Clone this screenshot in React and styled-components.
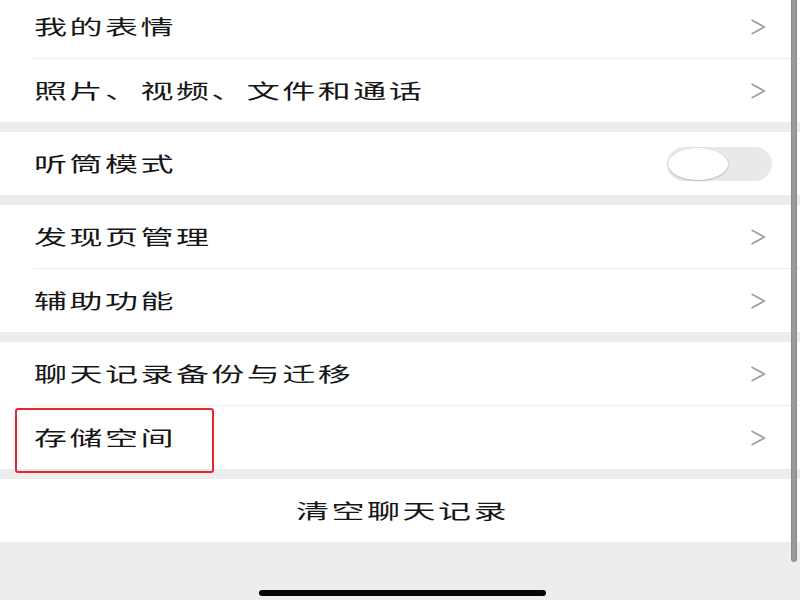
import styled, { createGlobalStyle } from 'styled-components'

const GlobalStyle = createGlobalStyle`
  html, body {
    margin: 0;
    padding: 0;
    background: #ededed;
    overflow: hidden;
  }
  body {
    font-family: "Noto Sans CJK SC", "Noto Sans", sans-serif;
  }
`

const Page = styled.div`
  position: relative;
  width: 800px;
  height: 600px;
  background: #ededed;
  overflow: hidden;
`

const List = styled.div`
  display: flex;
  flex-direction: column;
  margin-top: -5px;
`

const Group = styled.div`
  display: flex;
  flex-direction: column;
  background: #fff;
  margin-bottom: 10px;
`

const Row = styled.div`
  position: relative;
  height: 63px;
  display: flex;
  align-items: center;
  justify-content: ${p => (p.$center ? 'center' : 'space-between')};
  padding: 0 29px 0 34px;
`

const Divider = styled.div`
  height: 1px;
  margin-left: 33px;
  background: #ececec;
`

const Label = styled.span`
  display: inline-block;
  font-size: 20px;
  letter-spacing: 1.5px;
  color: #161616;
  white-space: nowrap;
  transform: scaleX(1.65);
  transform-origin: ${p => (p.$center ? 'center' : 'left')};
  line-height: 1;
`

const ChevronSvg = styled.svg`
  width: 16px;
  height: 16px;
  flex: none;
  margin-right: 5px;
`

const Switch = styled.div`
  width: 105px;
  height: 34px;
  border-radius: 17px;
  background: #e9e9e9;
  display: flex;
  align-items: center;
  margin-right: -1px;
`

const Knob = styled.div`
  width: 60px;
  height: 32px;
  margin-left: 1px;
  border-radius: 50%;
  background: #fff;
  box-shadow: 0 1px 2px rgba(0, 0, 0, 0.18), 0 0 0 1px rgba(0, 0, 0, 0.04);
`

// red annotation frame drawn over the storage row
const Highlight = styled.div`
  position: absolute;
  left: 15px;
  top: 2px;
  width: 195px;
  height: 61px;
  border: 2px solid #e8262b;
  border-radius: 3px;
  pointer-events: none;
`

const Scrollbar = styled.div`
  position: absolute;
  top: 0;
  right: 3px;
  width: 6px;
  height: 562px;
  background: #9a9a9a;
  border-left: 1px solid #8a8a8a;
  border-right: 1px solid #8a8a8a;
  box-sizing: border-box;
  border-radius: 0 0 3px 3px;
`

const HomeBar = styled.div`
  position: absolute;
  left: 259px;
  bottom: 4px;
  width: 287px;
  height: 6px;
  border-radius: 3px;
  background: #050505;
`

const Chevron = () => (
  <ChevronSvg viewBox="0 0 16 16">
    <polyline points="1.5,1 14.5,8 1.5,15" fill="none" stroke="#9d9d9d" strokeWidth="1.6" />
  </ChevronSvg>
)

const groups = [
  ['我的表情', '照片、视频、文件和通话'],
  ['听筒模式'],
  ['发现页管理', '辅助功能'],
  ['聊天记录备份与迁移', '存储空间'],
]

const App = () => (
  <Page>
    <GlobalStyle />
    <List>
      {groups.map((items, gi) => (
        <Group key={gi}>
          {items.map((label, i) => (
            <div key={label}>
              {i > 0 && <Divider />}
              <Row>
                <Label>{label}</Label>
                {label === '听筒模式' ? (
                  <Switch><Knob /></Switch>
                ) : (
                  <Chevron />
                )}
                {label === '存储空间' && <Highlight />}
              </Row>
            </div>
          ))}
        </Group>
      ))}
      <Group>
        <Row $center>
          <Label $center>清空聊天记录</Label>
        </Row>
      </Group>
    </List>
    <Scrollbar />
    <HomeBar />
  </Page>
)

export default App
